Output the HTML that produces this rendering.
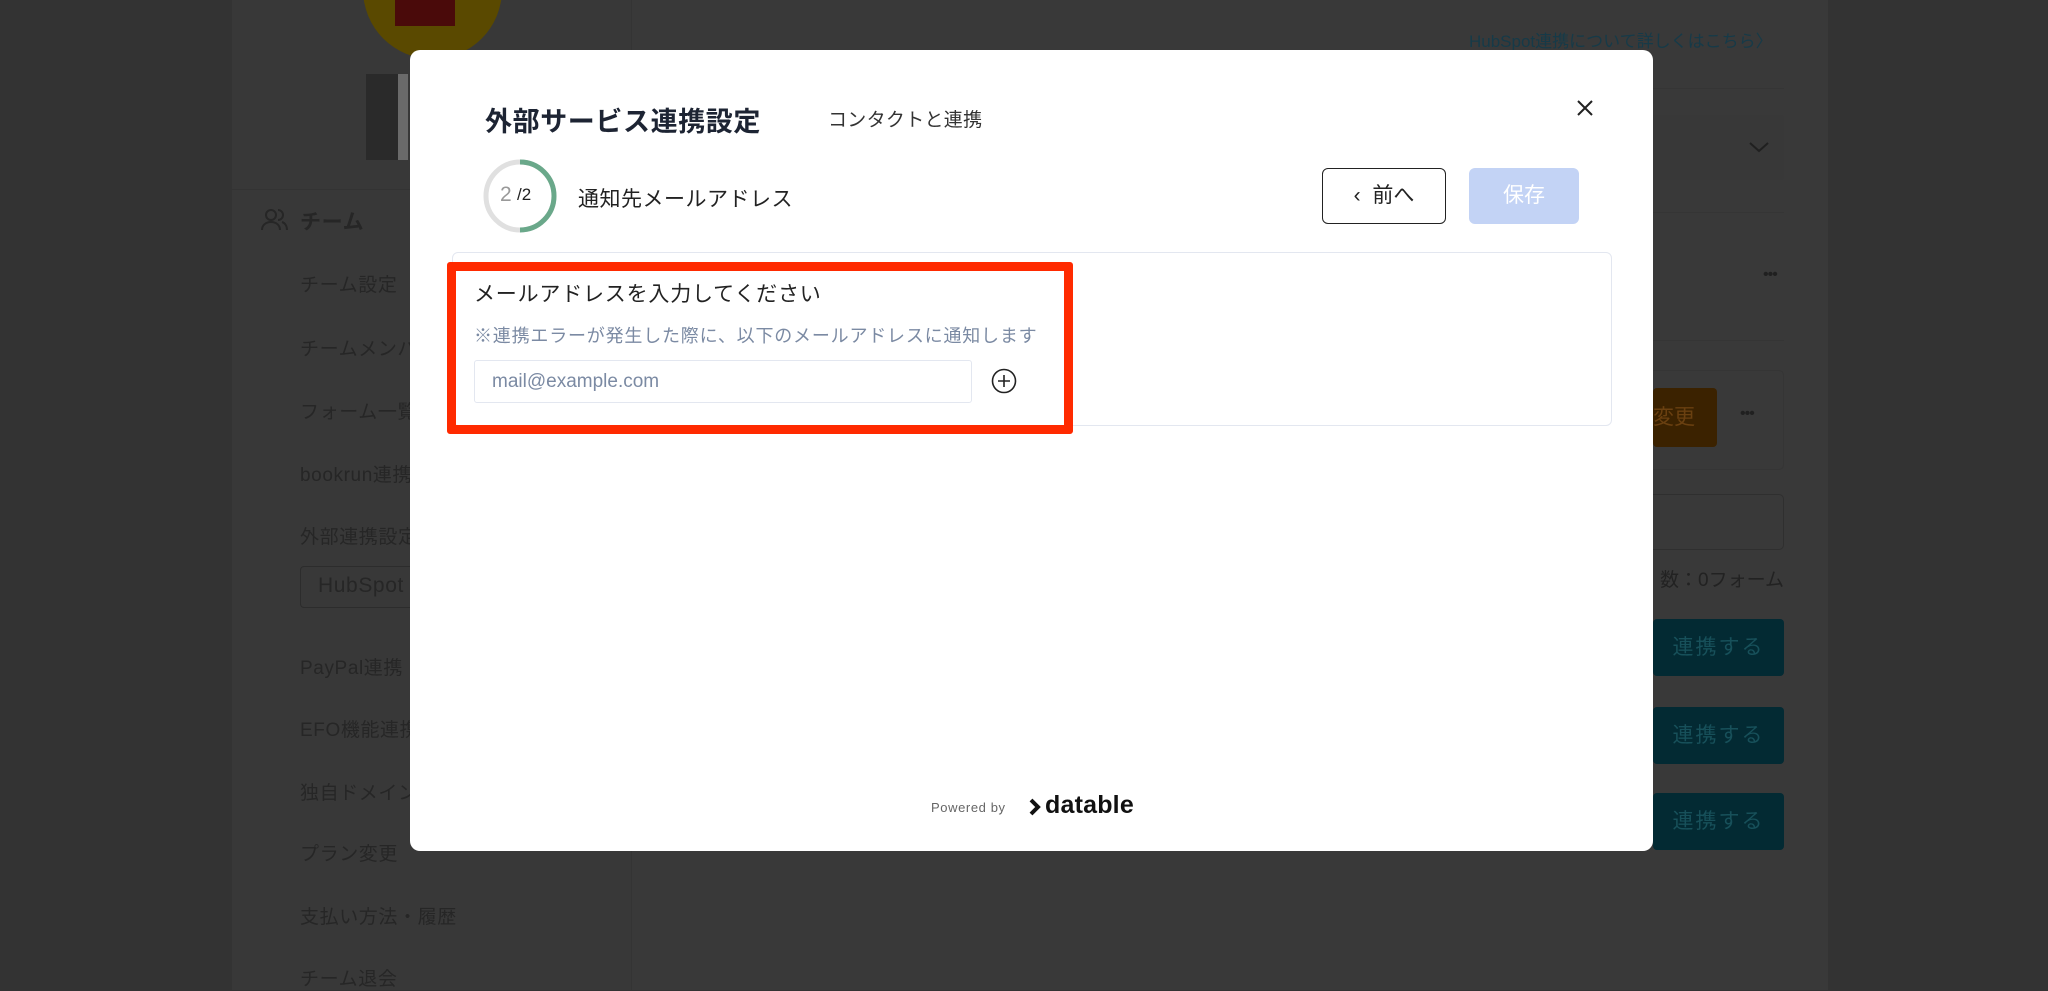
<!DOCTYPE html>
<html><head><meta charset="utf-8"><style>
*{margin:0;padding:0;box-sizing:border-box}
body{width:2048px;height:990px;background:#333;font-family:"Liberation Sans","Noto Sans CJK JP",sans-serif;position:relative;overflow:hidden}
.a{position:absolute;white-space:nowrap}
.side{left:232px;top:0;width:400px;height:990px;background:#383838;border-right:1px solid #343434}
.main{left:632px;top:0;width:1196px;height:990px;background:#393939}
.si{left:300px;font-size:19px;color:#262626;letter-spacing:0.6px}
.modal{left:410px;top:50px;width:1243px;height:801px;background:#fff;border-radius:10px}
.tbtn{left:1653px;width:131px;height:57px;background:#032a33;border-radius:4px;color:#17505a;font-size:21px;text-align:center;line-height:57px;letter-spacing:2px}
.hl{left:632px;width:1152px;height:1px;background:#353535}
</style></head><body>
<div class="a side"></div>
<div class="a main"></div>
<div class="a" style="left:363px;top:-80px;width:139px;height:139px;border-radius:50%;background:#5a4900"></div>
<div class="a" style="left:395px;top:0;width:60px;height:26px;background:#4a0a0a"></div>
<div class="a" style="left:366px;top:74px;width:42px;height:86px;background:#2a2a2a"></div>
<div class="a" style="left:398px;top:74px;width:10px;height:86px;background:#6a6a6a"></div>
<div class="a" style="left:232px;top:189px;width:400px;height:1px;background:#333"></div>
<svg class="a" style="left:260px;top:207px" width="30" height="26" viewBox="0 0 30 26" fill="none" stroke="#262626" stroke-width="2"><circle cx="11" cy="8" r="5"/><path d="M2 23c0-5 4-8 9-8s9 3 9 8"/><path d="M18 3a5 5 0 0 1 0 10M22 15c3 1 5 4 5 8"/></svg>
<div class="a si" style="top:206px;font-weight:bold;font-size:21px">チーム</div>
<div class="a si" style="top:270px">チーム設定</div>
<div class="a si" style="top:334px">チームメンバ</div>
<div class="a si" style="top:397px">フォーム一覧</div>
<div class="a si" style="top:460px">bookrun連携</div>
<div class="a si" style="top:522px">外部連携設定</div>
<div class="a" style="left:300px;top:566px;width:140px;height:42px;border:1px solid #2c2c2c;border-radius:4px;font-size:21px;color:#262626;padding:7px 17px;letter-spacing:0.6px">HubSpot</div>
<div class="a si" style="top:653px">PayPal連携</div>
<div class="a si" style="top:715px">EFO機能連携</div>
<div class="a si" style="top:778px">独自ドメイン</div>
<div class="a si" style="top:839px">プラン変更</div>
<div class="a si" style="top:902px">支払い方法・履歴</div>
<div class="a si" style="top:964px">チーム退会</div>
<div class="a" style="left:1469px;top:27px;font-size:17px;color:#163a48">HubSpot連携について詳しくはこちら〉</div>
<div class="a hl" style="top:88px"></div>
<div class="a" style="left:1600px;top:115px;width:184px;height:65px;background:#383838;border-radius:4px"></div>
<svg class="a" style="left:1749px;top:141px" width="20" height="12"><path d="M1 2l9 8 9-8" stroke="#202020" stroke-width="2" fill="none"/></svg>
<div class="a hl" style="top:212px"></div>
<div class="a" style="left:1763px;top:266px;font-size:16px;color:#202020;letter-spacing:-1px">•••</div>
<div class="a hl" style="top:340px"></div>
<div class="a" style="left:1600px;top:370px;width:184px;height:100px;border:1px solid #353535;border-radius:5px"></div>
<div class="a" style="left:1653px;top:388px;width:64px;height:59px;background:#3b2200;border-radius:4px;color:#6a4010;font-size:21px;line-height:59px">変更</div>
<div class="a" style="left:1740px;top:405px;font-size:16px;color:#202020;letter-spacing:-1px">•••</div>
<div class="a" style="left:1600px;top:494px;width:184px;height:56px;border:1px solid #2f2f2f;border-radius:5px"></div>
<div class="a" style="left:1640px;top:565px;font-size:19px;color:#222;width:144px;text-align:right">数：0フォーム</div>
<div class="a tbtn" style="top:619px">連携する</div>
<div class="a tbtn" style="top:707px">連携する</div>
<div class="a tbtn" style="top:793px">連携する</div>

<div class="a modal"></div>
<div class="a" style="left:485px;top:100px;font-size:27px;font-weight:bold;color:#1d2433;letter-spacing:0.6px">外部サービス連携設定</div>
<div class="a" style="left:828px;top:105px;font-size:19px;color:#333;letter-spacing:0.3px">コンタクトと連携</div>
<svg class="a" style="left:1576px;top:99px" width="18" height="18"><path d="M2 2l14 14M16 2L2 16" stroke="#222" stroke-width="2"/></svg>
<svg class="a" style="left:482px;top:158px" width="76" height="76"><circle cx="38" cy="38" r="34" stroke="#e0e0e0" stroke-width="5" fill="none"/><path d="M38 4a34 34 0 0 1 0 68" stroke="#6aa88a" stroke-width="5" fill="none"/></svg>
<div class="a" style="left:500px;top:183px;font-size:21px;color:#999">2</div>
<div class="a" style="left:517px;top:185px;font-size:17px;color:#222">/2</div>
<div class="a" style="left:578px;top:183px;font-size:21px;color:#222;letter-spacing:0.5px">通知先メールアドレス</div>
<div class="a" style="left:1322px;top:168px;width:124px;height:56px;border:1.5px solid #222;border-radius:6px;font-size:21px;color:#222;line-height:53px;text-align:center">‹&nbsp;&nbsp;前へ</div>
<div class="a" style="left:1469px;top:168px;width:110px;height:56px;background:#c3d3f5;border-radius:6px;font-size:21px;color:#fff;line-height:56px;text-align:center">保存</div>
<div class="a" style="left:452px;top:252px;width:1160px;height:174px;border:1.5px solid #e3e7f0;border-radius:6px"></div>
<div class="a" style="left:447px;top:262px;width:626px;height:172px;border:9px solid #ff2a00;border-radius:3px"></div>
<div class="a" style="left:474px;top:278px;font-size:21px;color:#222;letter-spacing:0.8px">メールアドレスを入力してください</div>
<div class="a" style="left:474px;top:322px;font-size:18px;color:#7b8aa3;letter-spacing:0.8px">※連携エラーが発生した際に、以下のメールアドレスに通知します</div>
<div class="a" style="left:474px;top:360px;width:498px;height:43px;border:1.5px solid #e3e7f0;border-radius:3px;font-size:19px;color:#7b8aa3;padding:10px 17px">mail@example.com</div>
<svg class="a" style="left:991px;top:368px" width="26" height="26"><circle cx="13" cy="13" r="11.5" stroke="#222" stroke-width="1.6" fill="none"/><path d="M13 7v12M7 13h12" stroke="#222" stroke-width="1.6"/></svg>
<div class="a" style="left:931px;top:800px;font-size:13px;color:#666;letter-spacing:0.6px">Powered by</div>
<svg class="a" style="left:1028px;top:797px" width="14" height="20"><path d="M3 3l7 7-7 7" stroke="#111" stroke-width="4" fill="none"/></svg>
<div class="a" style="left:1045px;top:791px;font-size:25px;font-weight:bold;color:#111;letter-spacing:0.2px">datable</div>
</body></html>
